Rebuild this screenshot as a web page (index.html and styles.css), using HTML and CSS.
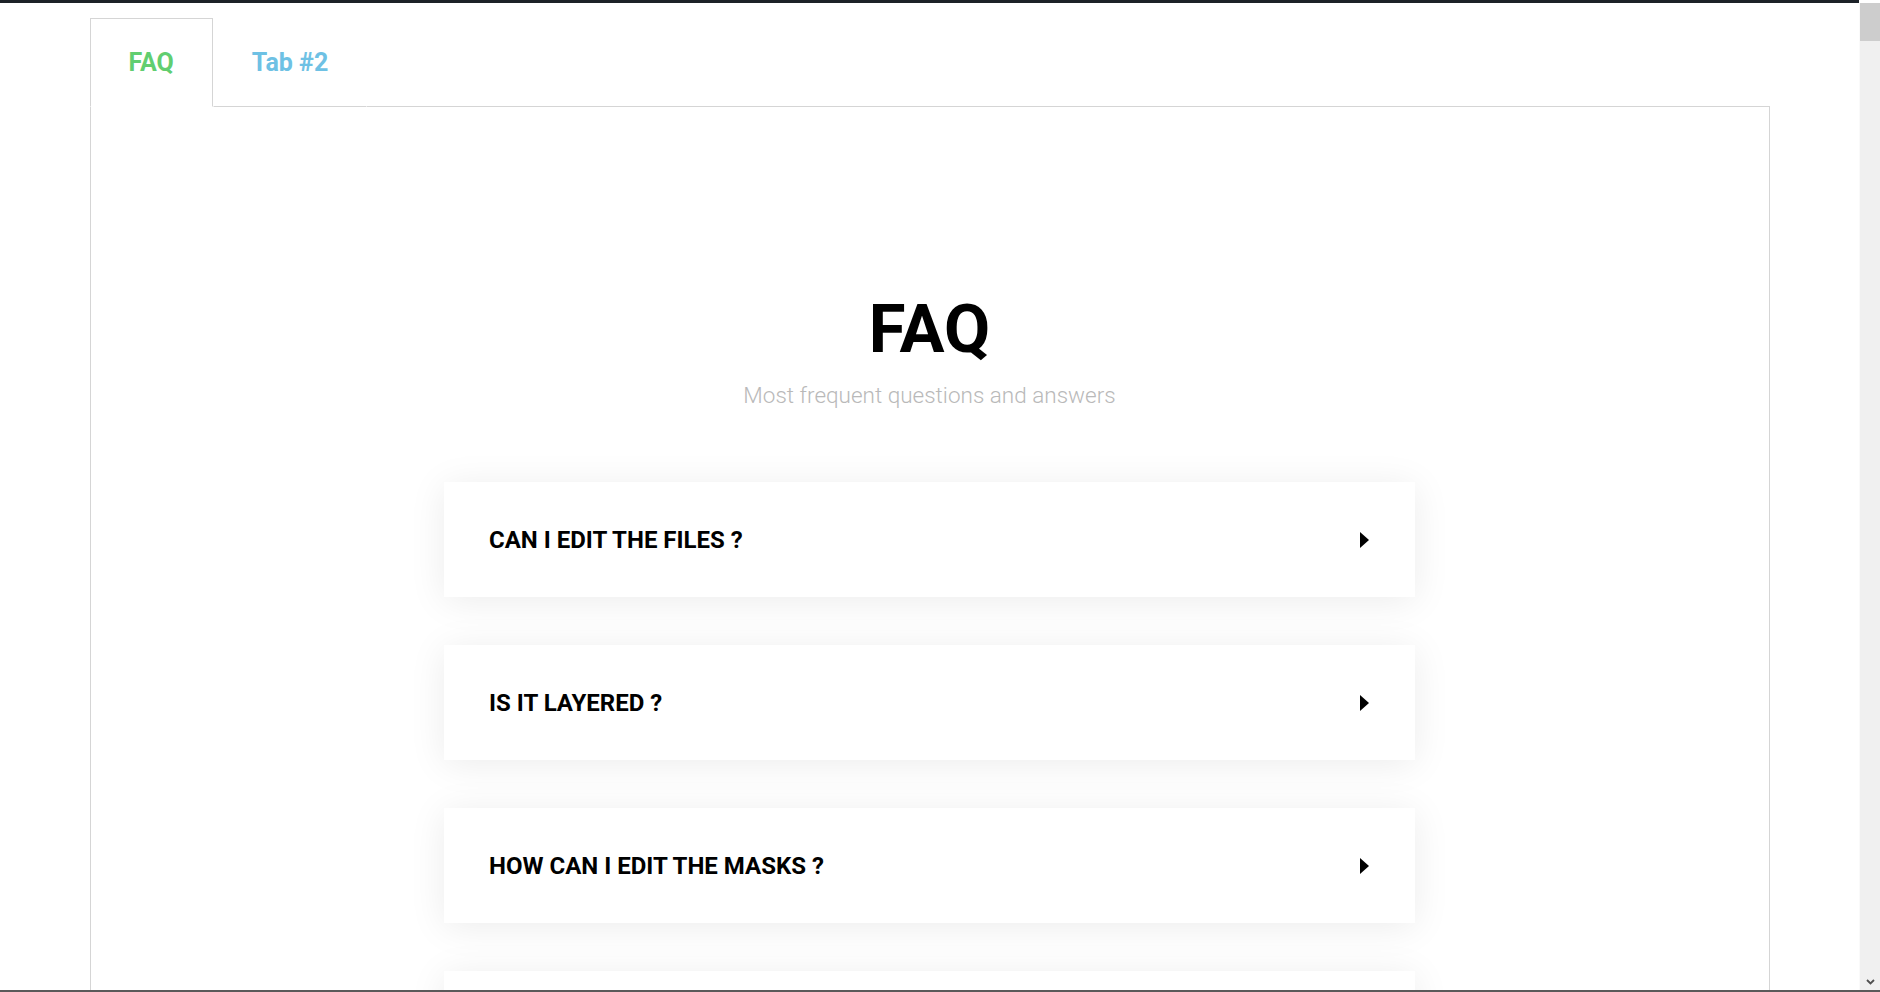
FILE: index.html
```html
<!DOCTYPE html>
<html lang="en">
<head>
    <meta charset="UTF-8">
    <title>FAQ</title>
    <link rel="stylesheet" href="styles.css">
</head>
<body>
    <div class="top-bar"></div>
    <div class="window">
        <main class="page">
            <div class="tabs">
                <!-- Tab titles -->
                <div class="tab-titles">
                    <div class="tab-title active">FAQ</div>
                    <div class="tab-title">Tab #2</div>
                    <div class="tab-fill"></div>
                </div>

                <!-- Tab content -->
                <div class="tab-content">
                    <h2 class="faq-heading">FAQ</h2>
                    <p class="faq-sub">Most frequent questions and answers</p>

                    <div class="faq-list">
                        <div class="faq-item">
                            <span class="faq-question">CAN I EDIT THE FILES ?</span>
                            <svg class="caret" width="9" height="16" viewBox="0 0 9 16"><polygon points="0,0 9,8 0,16" fill="#000"/></svg>
                        </div>
                        <div class="faq-item">
                            <span class="faq-question">IS IT LAYERED ?</span>
                            <svg class="caret" width="9" height="16" viewBox="0 0 9 16"><polygon points="0,0 9,8 0,16" fill="#000"/></svg>
                        </div>
                        <div class="faq-item">
                            <span class="faq-question">HOW CAN I EDIT THE MASKS ?</span>
                            <svg class="caret" width="9" height="16" viewBox="0 0 9 16"><polygon points="0,0 9,8 0,16" fill="#000"/></svg>
                        </div>
                        <div class="faq-item">
                            <span class="faq-question">WHAT SIZE ARE THE FILES ?</span>
                            <svg class="caret" width="9" height="16" viewBox="0 0 9 16"><polygon points="0,0 9,8 0,16" fill="#000"/></svg>
                        </div>
                    </div>
                </div>
            </div>
        </main>

        <!-- Scrollbar -->
        <div class="scrollbar">
            <div class="scroll-thumb"></div>
            <div class="scroll-track"></div>
            <svg class="scroll-arrow" width="9" height="6" viewBox="0 0 9 6"><polyline points="1,1 4.5,4.5 8,1" fill="none" stroke="#505050" stroke-width="1.8"/></svg>
        </div>
    </div>
    <div class="bottom-bar"></div>
</body>
</html>
```

FILE: styles.css
```css
html, body {
    margin: 0;
    height: 100%;
}
body {
    display: flex;
    flex-direction: column;
    height: 992px;
    overflow: hidden;
    background-color: #fff;
    font-family: Roboto, "Liberation Sans", sans-serif;
}
.top-bar {
    height: 3px;
    margin-right: 21px;
    background-color: #1c2228;
}
.bottom-bar {
    height: 2px;
    background-color: #5a5a5a;
}
.window {
    flex: 1;
    display: flex;
    min-height: 0;
}
.page {
    flex: 1;
    min-width: 0;
    overflow: hidden;
    padding-top: 15px;
}
.tabs {
    width: 1680px;
    margin: 0 auto;
}
.tab-titles {
    display: flex;
}
.tab-title {
    padding: 31px 38px 30px;
    font-size: 25px;
    line-height: 26px;
    font-weight: 700;
    color: #6ec1e4;
    border: 1px solid transparent;
    border-bottom: 1px solid #d5d5d5;
}
.tab-title.active {
    color: #61ce70;
    border-color: #d5d5d5;
    border-bottom-color: #fff;
}
.tab-fill {
    flex: 1;
    border-bottom: 1px solid #d5d5d5;
}
.tab-content {
    border: 1px solid #d5d5d5;
    border-top: none;
    padding-top: 189px;
    height: 900px;
}
.faq-heading {
    margin: 0;
    text-align: center;
    font-size: 67px;
    line-height: 66px;
    font-weight: 700;
    color: #000;
}
.faq-sub {
    margin: 22px 0 0;
    text-align: center;
    font-size: 22.5px;
    line-height: 22px;
    font-weight: 300;
    color: #b9b9b9;
}
.faq-list {
    width: 971px;
    margin: 76px auto 0;
    display: flex;
    flex-direction: column;
    gap: 48px;
}
.faq-item {
    display: flex;
    align-items: center;
    justify-content: space-between;
    padding: 45px 46px 44px 45px;
    background: #fff;
    box-shadow: 0 4px 35px rgba(0, 0, 0, 0.08);
}
.faq-question {
    font-size: 24px;
    line-height: 26px;
    font-weight: 700;
    color: #000;
}
.caret {
    display: block;
}
.scrollbar {
    width: 21px;
    display: flex;
    flex-direction: column;
    background-color: #f0f0f0;
    border-left: 1px solid #fafafa;
    box-sizing: border-box;
}
.scroll-thumb {
    height: 38px;
    background-color: #cdcdcd;
}
.scroll-track {
    flex: 1;
}
.scroll-arrow {
    display: block;
    margin: 0 auto 5px;
}
```
